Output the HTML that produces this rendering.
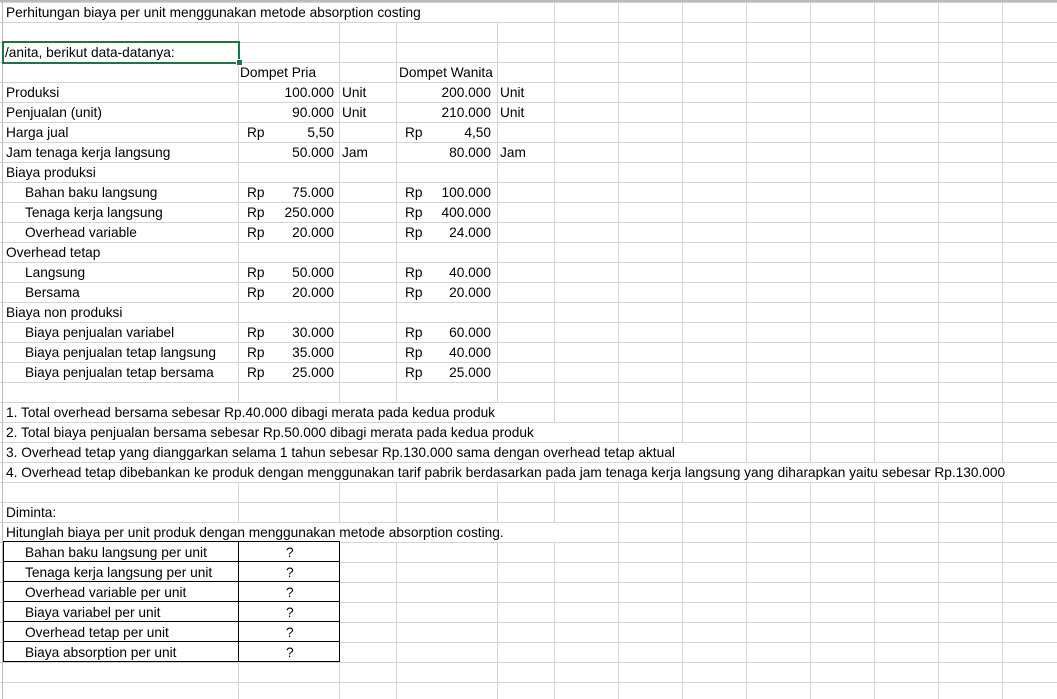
<!DOCTYPE html>
<html><head><meta charset="utf-8"><style>
html,body{margin:0;padding:0;background:#fff;}
body{width:1057px;height:699px;position:relative;overflow:hidden;font-family:"Liberation Sans",sans-serif;font-size:13.7px;color:#000;
background-color:#fff;}
.grid{position:absolute;left:0;top:0;width:1057px;height:699px;
background-image:repeating-linear-gradient(to bottom,#d4d4d4 0,#d4d4d4 1px,transparent 1px,transparent 20px);
background-position:0 2px;}
.v{position:absolute;top:0;width:1px;height:699px;background:#d4d4d4;}
.t{position:absolute;height:19px;line-height:20px;white-space:nowrap;}
.w{background:#fff;padding-right:2px;}
.r{text-align:right;}
.b{position:absolute;background:#000;}
</style></head><body>
<div class="grid"></div>
<div class="v" style="left:2px;background:#bbb"></div>
<div class="v" style="left:238px"></div>
<div class="v" style="left:339px"></div>
<div class="v" style="left:396px"></div>
<div class="v" style="left:497px"></div>
<div class="v" style="left:554px"></div>
<div class="v" style="left:618px"></div>
<div class="v" style="left:682px"></div>
<div class="v" style="left:746px"></div>
<div class="v" style="left:810px"></div>
<div class="v" style="left:874px"></div>
<div class="v" style="left:938px"></div>
<div class="v" style="left:1002px"></div>
<div style="position:absolute;left:0;top:0;width:1057px;height:2px;background:#bbb"></div>

<div class="t w" style="left:3px;top:3px;width:490px;padding-left:3px">Perhitungan biaya per unit menggunakan metode absorption costing</div>

<div class="t" style="left:3px;top:43px;width:234px;background:#fff;padding-left:2px">/anita, berikut data-datanya:</div>
<div style="position:absolute;left:2px;top:41px;width:234px;height:19px;border:2px solid #217346"></div>
<div style="position:absolute;left:236px;top:59px;width:5px;height:5px;background:#217346;border:1px solid #fff"></div>

<div class="t" style="left:240px;top:63px">Dompet Pria</div>
<div class="t" style="left:399px;top:63px">Dompet Wanita</div>

<div class="t" style="left:6px;top:83px">Produksi</div>
<div class="t r" style="left:238px;width:96px;top:83px">100.000</div>
<div class="t" style="left:342px;top:83px">Unit</div>
<div class="t r" style="left:396px;width:95px;top:83px">200.000</div>
<div class="t" style="left:500px;top:83px">Unit</div>

<div class="t" style="left:6px;top:103px">Penjualan (unit)</div>
<div class="t r" style="left:238px;width:96px;top:103px">90.000</div>
<div class="t" style="left:342px;top:103px">Unit</div>
<div class="t r" style="left:396px;width:95px;top:103px">210.000</div>
<div class="t" style="left:500px;top:103px">Unit</div>

<div class="t" style="left:6px;top:123px">Harga jual</div>
<div class="t" style="left:247px;top:123px">Rp</div>
<div class="t r" style="left:238px;width:96px;top:123px">5,50</div>
<div class="t" style="left:405px;top:123px">Rp</div>
<div class="t r" style="left:396px;width:95px;top:123px">4,50</div>

<div class="t" style="left:6px;top:143px">Jam tenaga kerja langsung</div>
<div class="t r" style="left:238px;width:96px;top:143px">50.000</div>
<div class="t" style="left:342px;top:143px">Jam</div>
<div class="t r" style="left:396px;width:95px;top:143px">80.000</div>
<div class="t" style="left:500px;top:143px">Jam</div>

<div class="t" style="left:6px;top:163px">Biaya produksi</div>

<div class="t" style="left:25px;top:183px">Bahan baku langsung</div>
<div class="t" style="left:247px;top:183px">Rp</div><div class="t r" style="left:238px;width:96px;top:183px">75.000</div>
<div class="t" style="left:405px;top:183px">Rp</div><div class="t r" style="left:396px;width:95px;top:183px">100.000</div>

<div class="t" style="left:25px;top:203px">Tenaga kerja langsung</div>
<div class="t" style="left:247px;top:203px">Rp</div><div class="t r" style="left:238px;width:96px;top:203px">250.000</div>
<div class="t" style="left:405px;top:203px">Rp</div><div class="t r" style="left:396px;width:95px;top:203px">400.000</div>

<div class="t" style="left:25px;top:223px">Overhead variable</div>
<div class="t" style="left:247px;top:223px">Rp</div><div class="t r" style="left:238px;width:96px;top:223px">20.000</div>
<div class="t" style="left:405px;top:223px">Rp</div><div class="t r" style="left:396px;width:95px;top:223px">24.000</div>

<div class="t" style="left:6px;top:243px">Overhead tetap</div>

<div class="t" style="left:25px;top:263px">Langsung</div>
<div class="t" style="left:247px;top:263px">Rp</div><div class="t r" style="left:238px;width:96px;top:263px">50.000</div>
<div class="t" style="left:405px;top:263px">Rp</div><div class="t r" style="left:396px;width:95px;top:263px">40.000</div>

<div class="t" style="left:25px;top:283px">Bersama</div>
<div class="t" style="left:247px;top:283px">Rp</div><div class="t r" style="left:238px;width:96px;top:283px">20.000</div>
<div class="t" style="left:405px;top:283px">Rp</div><div class="t r" style="left:396px;width:95px;top:283px">20.000</div>

<div class="t" style="left:6px;top:303px">Biaya non produksi</div>

<div class="t" style="left:25px;top:323px">Biaya penjualan variabel</div>
<div class="t" style="left:247px;top:323px">Rp</div><div class="t r" style="left:238px;width:96px;top:323px">30.000</div>
<div class="t" style="left:405px;top:323px">Rp</div><div class="t r" style="left:396px;width:95px;top:323px">60.000</div>

<div class="t" style="left:25px;top:343px">Biaya penjualan tetap langsung</div>
<div class="t" style="left:247px;top:343px">Rp</div><div class="t r" style="left:238px;width:96px;top:343px">35.000</div>
<div class="t" style="left:405px;top:343px">Rp</div><div class="t r" style="left:396px;width:95px;top:343px">40.000</div>

<div class="t" style="left:25px;top:363px">Biaya penjualan tetap bersama</div>
<div class="t" style="left:247px;top:363px">Rp</div><div class="t r" style="left:238px;width:96px;top:363px">25.000</div>
<div class="t" style="left:405px;top:363px">Rp</div><div class="t r" style="left:396px;width:95px;top:363px">25.000</div>

<div class="t w" style="left:3px;top:403px;padding-left:3px;width:490px">1. Total overhead bersama sebesar Rp.40.000 dibagi merata pada kedua produk</div>
<div class="t w" style="left:3px;top:423px;padding-left:3px;width:547px">2. Total biaya penjualan bersama sebesar Rp.50.000 dibagi merata pada kedua produk</div>
<div class="t w" style="left:3px;top:443px;padding-left:3px;width:676px">3. Overhead tetap yang dianggarkan selama 1 tahun sebesar Rp.130.000 sama dengan overhead tetap aktual</div>
<div class="t w" style="left:3px;top:463px;padding-left:3px;width:996px">4. Overhead tetap dibebankan ke produk dengan menggunakan tarif pabrik berdasarkan pada jam tenaga kerja langsung yang diharapkan yaitu sebesar Rp.130.000</div>

<div class="t" style="left:6px;top:503px">Diminta:</div>
<div class="t w" style="left:3px;top:523px;padding-left:3px;width:547px">Hitunglah biaya per unit produk dengan menggunakan metode absorption costing.</div>

<div style="position:absolute;left:3px;top:541px;width:336px;height:121px;background:#fff"></div>
<div class="t" style="left:25px;top:543px">Bahan baku langsung per unit</div>
<div class="t" style="left:25px;top:563px">Tenaga kerja langsung per unit</div>
<div class="t" style="left:25px;top:583px">Overhead variable per unit</div>
<div class="t" style="left:25px;top:603px">Biaya variabel per unit</div>
<div class="t" style="left:25px;top:623px">Overhead tetap per unit</div>
<div class="t" style="left:25px;top:643px">Biaya absorption per unit</div>
<div class="t" style="left:286px;top:543px">?</div>
<div class="t" style="left:286px;top:563px">?</div>
<div class="t" style="left:286px;top:583px">?</div>
<div class="t" style="left:286px;top:603px">?</div>
<div class="t" style="left:286px;top:623px">?</div>
<div class="t" style="left:286px;top:643px">?</div>
<div class="b" style="left:3px;top:541px;width:1px;height:121px"></div>
<div class="b" style="left:238px;top:541px;width:1px;height:121px"></div>
<div class="b" style="left:339px;top:541px;width:1px;height:121px"></div>
<div class="b" style="left:3px;top:541px;width:337px;height:1px"></div>
<div class="b" style="left:3px;top:561px;width:337px;height:1px"></div>
<div class="b" style="left:3px;top:581px;width:337px;height:1px"></div>
<div class="b" style="left:3px;top:601px;width:337px;height:1px"></div>
<div class="b" style="left:3px;top:621px;width:337px;height:1px"></div>
<div class="b" style="left:3px;top:641px;width:337px;height:1px"></div>
<div class="b" style="left:3px;top:661px;width:337px;height:1px"></div>
</body></html>
